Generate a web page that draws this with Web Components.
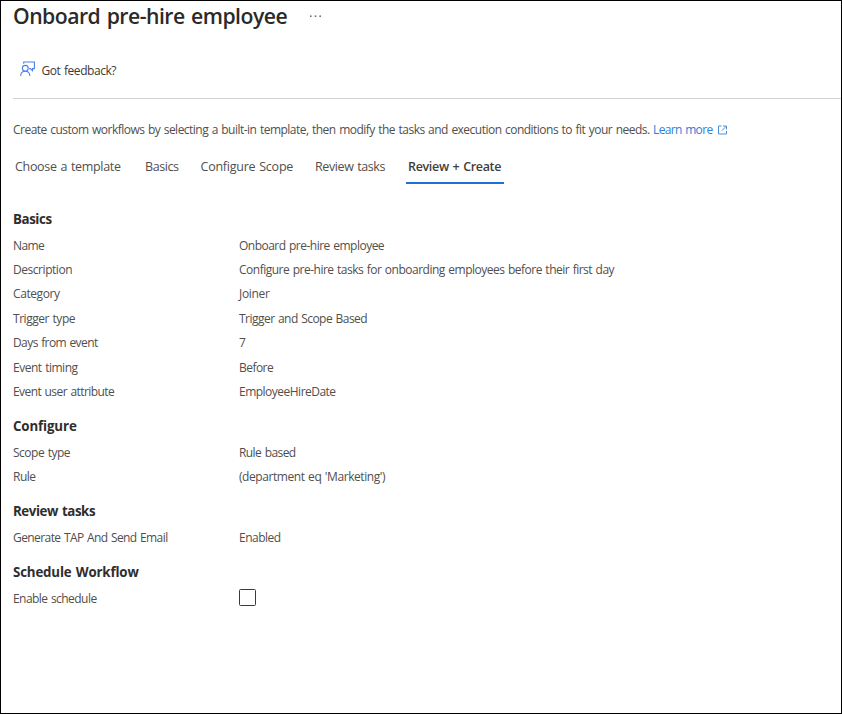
<!DOCTYPE html>
<html lang="en">
<head>
<meta charset="utf-8">
<title>Onboard pre-hire employee</title>
<style>
html,body{margin:0;height:100%;background:#fff}
body{font-family:"Open Sans","Noto Sans",sans-serif;font-size:12px;color:#504f4e;overflow:hidden}
</style>
</head>
<body>
<workflow-page></workflow-page>
<script>
const define = (name, html, init) => customElements.define(name, class extends HTMLElement {
  connectedCallback() {
    if (this.shadowRoot) return;
    const t = document.createElement('template');
    t.innerHTML = html;
    this.attachShadow({mode: 'open'}).append(t.content.cloneNode(true));
    if (init) init(this, this.shadowRoot);
  }
});

/* A single line whose tracking is adjusted to span the given width. */
define('fit-text', `<style>:host{display:block;white-space:nowrap;flex:none}span{display:inline-block;word-spacing:.07em}</style><span></span>`, (el, root) => {
  const s = root.querySelector('span');
  s.textContent = el.getAttribute('text');
  const w = parseFloat(el.getAttribute('width'));
  el.style.width = w + 'px';
  const n = s.textContent.length;
  s.style.letterSpacing = ((w - 0.4 - s.getBoundingClientRect().width) / n).toFixed(4) + 'px';
});

define('page-header', `<style>
:host{display:flex;align-items:center;height:30px;color:#2b2a29}
.t{font-size:21.2px;font-weight:600;line-height:30px}
svg{margin-left:22.5px;display:block}
</style><fit-text class="t" width="274.5" text="Onboard pre-hire employee"></fit-text>
<svg width="13" height="4" fill="#72706e"><rect x="0" y="1.4" width="1.6" height="1.6"/><rect x="4.7" y="1.4" width="1.6" height="1.6"/><rect x="9.4" y="1.4" width="1.6" height="1.6"/></svg>`);

define('command-bar', `<style>
:host{display:flex;align-items:center;height:56px;margin-top:12px;padding-left:7px;border-bottom:1px solid #d4d3d2;gap:6.5px;color:#3b3a39;box-sizing:border-box}
svg{display:block;margin-top:-3px}
</style><svg width="15" height="16" viewBox="0 0 15 16" fill="none" stroke="#4a82e4" stroke-width="1.1"><path d="M3.7 2.8V1h10.7v6.6h-1.9v2.1l-2.2-2.1H9.2"/><circle cx="5.3" cy="7.3" r="2.9"/><path d="M.6 15c.2-2.9 2-4.7 4.7-4.7s4.4 1.8 4.6 4.7"/></svg><fit-text width="75" text="Got feedback?"></fit-text>`);

define('page-intro', `<style>
:host{display:flex;align-items:center;height:20px;margin-top:20px}
a{display:flex;align-items:center;color:#2b7fd8;margin-left:3px;gap:5px}
svg{margin-top:1px}
</style><fit-text width="637" text="Create custom workflows by selecting a built-in template, then modify the tasks and execution conditions to fit your needs."></fit-text><a><fit-text width="60" text="Learn more"></fit-text><svg width="9" height="10" viewBox="0 0 9 10" fill="none" stroke="#4a91e2"><path d="M3.5 1H.5v8h8V6M5 1h3.5v3.5M8.3 1.2 3.8 5.7"/></svg></a>`);

define('tab-item', `<style>
:host{display:flex;height:31px;font-size:12.5px;box-sizing:border-box;padding:0 2px;line-height:28px;border-bottom:2px solid transparent}
:host([active]){font-weight:600;color:#3f3e3d;border-color:#1f6fd6}
</style>`, (el, root) => {
  const f = document.createElement('fit-text');
  f.setAttribute('text', el.getAttribute('text'));
  f.setAttribute('width', el.getAttribute('width'));
  root.append(f);
});

define('tab-list', `<style>:host{display:flex;margin-top:14px}
tab-item + tab-item{margin-left:17.5px}tab-item:nth-of-type(2){margin-left:20px}tab-item[active]{margin-left:18.5px}</style>
<tab-item width="106" text="Choose a template"></tab-item><tab-item width="34" text="Basics"></tab-item><tab-item width="93" text="Configure Scope"></tab-item><tab-item width="70.5" text="Review tasks"></tab-item><tab-item active style="margin-left:18.5px" width="93.5" text="Review + Create"></tab-item>`);

define('summary-section', `<style>
:host{display:block;margin-bottom:10.1px}
h2{margin:0 0 2px;font-size:13.3px;font-weight:700;line-height:24.4px;height:24.4px;color:#2f2e2d}
</style><h2></h2><slot></slot>`, (el, root) => {
  root.querySelector('h2').innerHTML = `<fit-text text="${el.getAttribute('heading')}" width="${el.getAttribute('width')}"></fit-text>`;
});

define('summary-row', `<style>
:host{display:grid;grid-template-columns:226px 1fr;align-items:center;height:24.4px;line-height:20px}
</style>`, (el, root) => {
  const a = n => el.getAttribute(n);
  root.innerHTML += `<fit-text text="${a('label')}" width="${a('lw')}"></fit-text>` +
    (a('value') ? `<fit-text text="${a('value')}" width="${a('vw')}"></fit-text>` : '<slot></slot>');
});

define('check-box', `<style>:host{display:block;box-sizing:border-box;width:17px;height:17px;margin-bottom:3px;border:1px solid #3b3a39;border-radius:1.5px}</style>`);

define('workflow-page', `<style>
:host{display:block;box-sizing:border-box;width:842px;height:714px;border:1px solid #000;padding-left:12px;background:#fff}
main{margin-top:23px}
</style>
<page-header></page-header>
<command-bar></command-bar>
<page-intro></page-intro>
<tab-list></tab-list>
<main>
<summary-section heading="Basics" width="39">
<summary-row label="Name" lw="31.5" value="Onboard pre-hire employee" vw="145.5"></summary-row>
<summary-row label="Description" lw="59.5" value="Configure pre-hire tasks for onboarding employees before their first day" vw="375.5"></summary-row>
<summary-row label="Category" lw="47" value="Joiner" vw="31"></summary-row>
<summary-row label="Trigger type" lw="62.5" value="Trigger and Scope Based" vw="128.5"></summary-row>
<summary-row label="Days from event" lw="85" value="7" vw="7"></summary-row>
<summary-row label="Event timing" lw="65" value="Before" vw="34.5"></summary-row>
<summary-row label="Event user attribute" lw="101.5" value="EmployeeHireDate" vw="97"></summary-row>
</summary-section>
<summary-section heading="Configure" width="64">
<summary-row label="Scope type" lw="57.5" value="Rule based" vw="57"></summary-row>
<summary-row label="Rule" lw="23" value="(department eq 'Marketing')" vw="146.5"></summary-row>
</summary-section>
<summary-section heading="Review tasks" width="82.5">
<summary-row label="Generate TAP And Send Email" lw="155" value="Enabled" vw="42"></summary-row>
</summary-section>
<summary-section heading="Schedule Workflow" width="126">
<summary-row label="Enable schedule" lw="84"><check-box></check-box></summary-row>
</summary-section>
</main>`);
</script>
</body>
</html>
